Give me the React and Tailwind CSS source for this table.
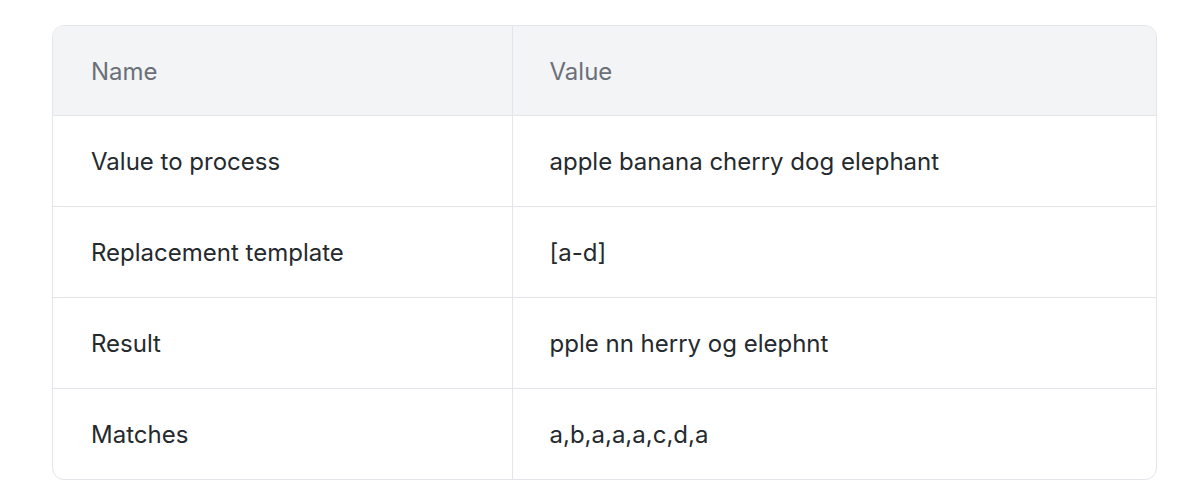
import React from 'react';

const rows = [
  { name: 'Value to process', value: 'apple banana cherry dog elephant' },
  { name: 'Replacement template', value: '[a-d]' },
  { name: 'Result', value: 'pple nn herry og elephnt' },
  { name: 'Matches', value: 'a,b,a,a,a,c,d,a' },
];

const App = () => {
  return (
    <div className="min-h-screen bg-white pl-[52px] pt-[25px]" style={{ fontFamily: 'Inter, "Noto Sans", sans-serif' }}>
      <div className="w-[1105px] overflow-hidden rounded-xl border border-[#e4e5ea]">
        <table className="w-full border-collapse text-[24px]">
          <thead>
            <tr className="h-[89px] bg-[#f3f4f6]">
              <th className="w-[459px] border-r border-[#e4e5ea] pl-[38px] pt-[3px] text-left font-normal text-[#6b7078]">Name</th>
              <th className="pl-[37px] pt-[3px] text-left font-normal text-[#6b7078]">Value</th>
            </tr>
          </thead>
          <tbody>
            {rows.map((row) => (
              <tr key={row.name} className="h-[91px] border-t border-[#e4e5ea]">
                <td className="border-r border-[#e4e5ea] pl-[38px] pt-[3px] text-[#252a2e]">{row.name}</td>
                <td className="pl-[37px] pt-[3px] text-[#252a2e]">{row.value}</td>
              </tr>
            ))}
          </tbody>
        </table>
      </div>
    </div>
  );
};

export default App;
